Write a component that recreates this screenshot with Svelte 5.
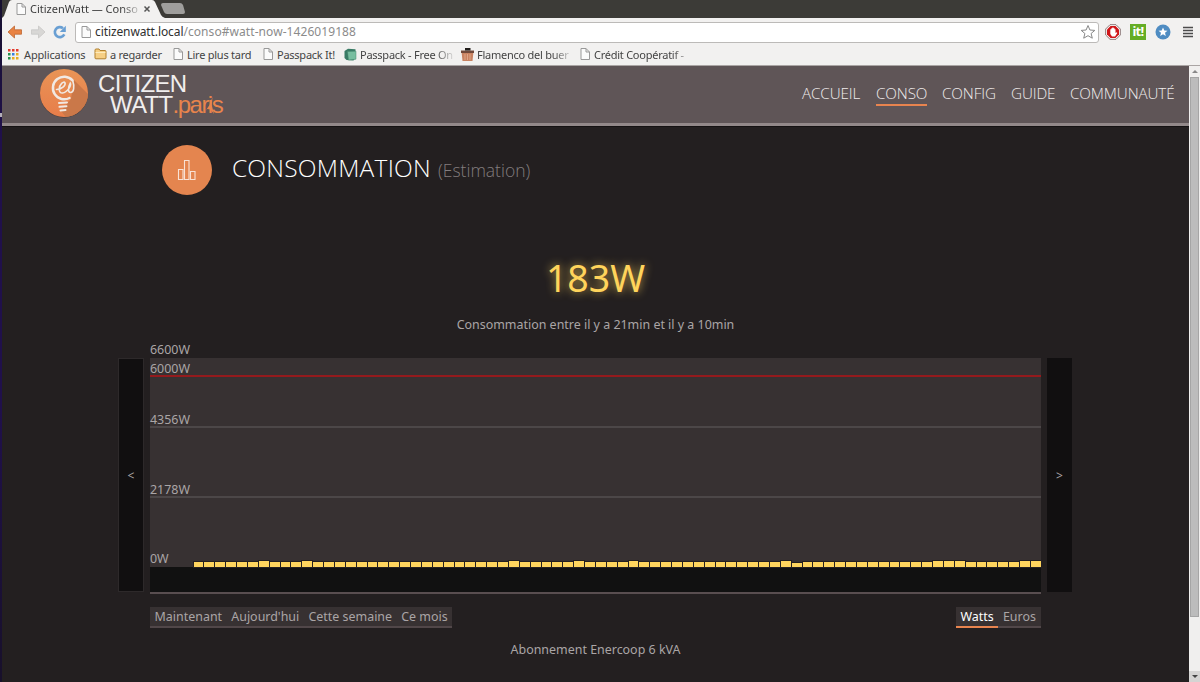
<script lang="ts">
	const bookmarks = [
		{ label: 'a regarder', icon: 'folder', width: 78 },
		{ label: 'Lire plus tard', icon: 'page', width: 90 },
		{ label: 'Passpack It!', icon: 'page', width: 82 },
		{ label: 'Passpack - Free On', icon: 'cube', width: 117, fade: true },
		{ label: 'Flamenco del buer', icon: 'photo', width: 118, fade: true },
		{ label: 'Crédit Coopératif -', icon: 'page', width: 120, fade: true }
	];

	const nav = [
		{ label: 'Accueil', width: 59 },
		{ label: 'Conso', width: 51 },
		{ label: 'Config', width: 54 },
		{ label: 'Guide', width: 44 },
		{ label: 'Communauté', width: 104 }
	];
	const periods = ['Maintenant', "Aujourd'hui", 'Cette semaine', 'Ce mois'];
	const units = ['Watts', 'Euros'];
	let unit = $state('Watts');

	// Offsets are from the top of the plot area.
	const scale = [
		{ label: '6600W', y: 0 },
		{ label: '6000W', y: 18, limit: true },
		{ label: '4356W', y: 69 },
		{ label: '2178W', y: 139 },
		{ label: '0W', y: 209 }
	];

	const peaks = [6, 10, 29, 35, 40, 54, 68, 69, 70, 76, 77];
	const bars = Array.from({ length: 78 }, (_, i) => (peaks.includes(i) ? 6 : i === 55 ? 4 : 5.4));
</script>

{#snippet page()}
	<svg class="ico" viewBox="0 0 12 14" width="12" height="14">
		<path d="M2 1.5h5l3.5 3.5v7.5H2zM7 1.5V5h3.5" fill="#fbfbfb" stroke="#999" stroke-width="1" />
	</svg>
{/snippet}

<div class="window">
	<div class="edge"><i></i></div>
	<div class="browser">
		<div class="tabs">
			<svg class="tabshape" viewBox="0 0 184 18" width="184" height="18">
				<path d="M0 18 2 16 7 2Q8 0 10 0H150Q152 0 153 2L159 15Q160 17 163 18Z" fill="#f2f1f0" />
				<path d="M159 5Q159 3 161 3H178Q180 3 181 5L183 12Q183 14 181 14H165Q163 14 162 12Z" fill="#9f9e9c" />
			</svg>
			<div class="tab">
				{@render page()}
				<span class="title">CitizenWatt — Conso</span>
				<svg viewBox="0 0 8 8" width="8" height="8"><path d="M1.5 1.5l5 5M6.5 1.5l-5 5" stroke="#555" stroke-width="1.5" /></svg>
			</div>
		</div>

		<div class="toolbar">
			<svg viewBox="0 0 16 14" width="16" height="14">
				<path d="M7.5 1 1 7l6.500 6V9.200H14.500V4.800H7.500z" fill="#e98242" stroke="#bd6733" stroke-width=".8" stroke-linejoin="round" />
			</svg>
			<svg class="forward" viewBox="0 0 16 14" width="16" height="14">
				<path d="M8.500 1 15 7 8.500 13V9.200H1.500V4.800H8.500z" fill="#d8d7d5" stroke="#c8c7c5" stroke-width=".8" stroke-linejoin="round" />
			</svg>
			<svg class="reload" viewBox="0 0 14 14" width="14" height="14">
				<path d="M11.300 9.400A5 5 0 1 1 10 3.200" fill="none" stroke="#699fd3" stroke-width="2.600" />
				<path d="M12.800.8V7H6.800z" fill="#699fd3" />
			</svg>
			<div class="address">
				{@render page()}
				<span class="url"><b>citizenwatt.local</b>/conso#watt-now-1426019188</span>
				<svg class="star" viewBox="0 0 16 16" width="16" height="16">
					<path d="M8 1.500 9.900 6l4.900.4-3.700 3.100 1.200 4.700L8 11.700l-4.300 2.500 1.200-4.700L1.200 6.400 6.100 6z" fill="#fff" stroke="#888" stroke-linejoin="round" />
				</svg>
			</div>
			<svg class="ext" viewBox="0 0 16 16" width="16" height="16">
				<path d="M5 .7h6L15.300 5v6L11 15.300H5L.7 11V5z" fill="#fff" stroke="#8b7777" />
				<path d="M5.500 2h5L14 5.500v5L10.500 14h-5L2 10.500v-5z" fill="#cf1518" />
				<path d="M5.300 7.500V5.300h1v-1h1v-.8h1.300v.8h1v.9h.9V9l1-.8.8.7-2.300 3.500H7L5.300 10z" fill="#fff" />
			</svg>
			<div class="it">it!</div>
			<svg viewBox="0 0 16 16" width="16" height="16">
				<circle cx="8" cy="8" r="7.500" fill="#4f8cc2" />
				<path d="m8 3.500 1.300 3 3.200.2-2.500 2.100.8 3.200L8 10.300 5.200 12 6 8.800 3.500 6.700l3.200-.2z" fill="#fff" />
			</svg>
			<svg class="menu" viewBox="0 0 10 12" width="10" height="12">
				<path d="M0 1.500h10M0 4.500h10M0 7.500h10M0 10.500h10" stroke="#4c4c4c" stroke-width="1.600" />
			</svg>
		</div>

		<div class="bookmarks">
			<div class="bookmark apps">
				<svg viewBox="0 0 11 11" width="11" height="11">
					{#each ['#e33b2e', '#e33b2e', '#e33b2e', '#25904e', '#347ee0', '#e5ac22', '#25904e', '#e5ac22', '#e5ac22'] as color, i}
						<rect x={(i % 3) * 4} y={Math.floor(i / 3) * 4} width="2.500" height="2.500" fill={color} />
					{/each}
				</svg>
				<span>Applications</span>
			</div>
			{#each bookmarks as mark}
				<div class="bookmark" class:fade={mark.fade} style:width="{mark.width}px">
					{#if mark.icon === 'page'}
						{@render page()}
					{:else if mark.icon === 'folder'}
						<svg viewBox="0 0 13 12" width="13" height="12">
							<path d="M1 10V2.200Q1 1 2 1h3l1 1.500h5q1 0 1 1V10q0 .8-1 .8H2q-1 0-1-.8z" fill="#f6cf85" stroke="#b1802e" />
							<path d="M1.500 4.500h10" stroke="#fdebbd" />
						</svg>
					{:else if mark.icon === 'cube'}
						<svg viewBox="0 0 13 13" width="13" height="13">
							<path d="M.5 3 4 .7l7.500.5V10L9.500 12.500l-7-.5L.5 10z" fill="#397b65" />
							<path d="m3.500 3.500 8.500-.3v8l-7.500.9z" fill="#78bea0" stroke="#47896f" stroke-width=".5" />
						</svg>
					{:else}
						<svg viewBox="0 0 13 13" width="13" height="13">
							<path d="M.5 3.500h12L11.500 13h-10z" fill="#c98261" />
							<path d="M0 2.500h13V5H0z" fill="#70483a" />
							<path d="M4 0h5.500v2.500H4z" fill="#211d1b" />
							<path d="M4 6v6M6.500 6v6M9 6v6" stroke="#e4ad90" stroke-width=".8" />
						</svg>
					{/if}
					<span>{mark.label}</span>
				</div>
			{/each}
		</div>

		<div class="viewport">
			<div class="site">
				<header>
					<svg class="bulb" viewBox="0 0 50 50" width="50" height="50">
						<defs>
							<clipPath id="disc"><circle cx="25" cy="25" r="24" /></clipPath>
							<linearGradient id="glow" x2="0" y2="1">
								<stop stop-color="#e99456" /><stop offset="1" stop-color="#e77d4a" />
							</linearGradient>
						</defs>
						<circle cx="25" cy="25.700" r="24" fill="#463d3e" />
						<circle cx="25" cy="25" r="24" fill="url(#glow)" />
						<path d="m35 12 17 17v24H30l-8-10 10-12z" fill="#ca7849" clip-path="url(#disc)" />
						<g fill="none" stroke="#f1e9e3" stroke-linecap="round">
							<path d="M33.500 12.300A11.300 11.300 0 1 0 30.500 30" stroke-width="2.500" />
							<path d="M17.500 21.500c5 0 9.500-4 8.500-6.700-1.200-2.300-5.800 1.700-5.800 6.400 0 5.500 5.600 5 9.800-.8 1.500-2.300 2-4 1.300-5.200-2.500 4.500-2.500 9.300.2 9.300 3.300 0 4.300-6 2.300-11.500" stroke-width="1.600" />
							<path d="m20 35 8-.6M20.500 38.800l7-.6M21.500 42.500l5-.4" stroke-width="2" />
						</g>
					</svg>
					<div class="brand">
						<span>CITIZEN</span>
						<span class="watt">WATT<em>.paris</em></span>
						<svg class="tower" viewBox="0 0 12 18" width="12" height="18">
							<path d="M10.500 0 9.700 8 12 17 8.500 12.500 5 12 1 17.500 7.500 8z" fill="#e8844c" />
						</svg>
					</div>
					<nav>
						{#each nav as item}
							<a href="#top" class:active={item.label === 'Conso'} style:width="{item.width}px">{item.label}</a>
						{/each}
					</nav>
				</header>

				<main>
					<div class="heading">
						<div class="badge">
							<svg viewBox="0 0 20 22" width="20" height="22">
								<path d="M1.500 10.500h4.500v10H1.500zM7.500 1.500h4.500v19H7.500zM13.500 12.500h4.500v8h-4.500z" fill="none" stroke="#f9e2d5" stroke-width="1.100" />
							</svg>
						</div>
						<h1>CONSOMMATION</h1>
						<small>(Estimation)</small>
					</div>

					<p class="now">183W</p>
					<p class="between">Consommation entre il y a 21min et il y a 10min</p>

					<div class="graph">
						<button class="prev">&lt;</button>
						<div class="chart">
							<div class="plot">
								{#each scale as step}
									<div class="step" class:limit={step.limit} class:bare={step.y === 0 || step.y === 209} style:top="{step.y}px">{step.label}</div>
								{/each}
								<div class="bars">
									{#each bars as height}
										<i style:height="{height}px"></i>
									{/each}
								</div>
							</div>
						</div>
						<button class="next">&gt;</button>
					</div>

					<div class="controls">
						<div class="group periods">
							{#each periods as period}
								<button>{period}</button>
							{/each}
						</div>
						<div class="group units">
							{#each units as name}
								<button class:active={unit === name} onclick={() => (unit = name)}>{name}</button>
							{/each}
						</div>
					</div>
					<p class="plan">Abonnement Enercoop 6 kVA</p>
				</main>
			</div>
			<div class="scrollbar">
				<div class="arrow up"></div>
				<div class="thumb"></div>
				<div class="arrow down"></div>
			</div>
		</div>
	</div>
</div>

<style>
	:global(body) {
		background: #231f20;
	}
	* {
		box-sizing: border-box;
	}
	svg {
		flex: none;
		display: block;
	}
	.window {
		display: flex;
		width: 1200px;
		height: 682px;
		overflow: hidden;
		font-family: 'Noto Sans', 'Open Sans', sans-serif;
	}
	.edge {
		width: 2px;
		padding-top: 113px;
		background: linear-gradient(#16102e, #20104b 20%, #20104b 60%, #18102b);
	}
	.edge i {
		display: block;
		height: 4px;
		background: #b3aeba;
	}
	.browser {
		flex: 1;
		display: flex;
		flex-direction: column;
		min-width: 0;
	}
	.tabs {
		position: relative;
		height: 18px;
		background: #3c3b37;
	}
	.tabshape {
		position: absolute;
		left: 0;
		top: 0;
	}
	.tab {
		position: relative;
		display: flex;
		align-items: center;
		height: 17px;
		padding-left: 13px;
		font-size: 11px;
		color: #3c3c3c;
	}
	.title {
		width: 109px;
		margin: 0 4px 0 3px;
		white-space: nowrap;
		-webkit-mask-image: linear-gradient(90deg, #000 84%, rgba(0, 0, 0, 0.2));
	}
	.toolbar {
		display: flex;
		align-items: center;
		height: 27px;
		padding: 1px 5px 0;
		background: #f2f1f0;
	}
	.forward {
		margin-left: 7px;
	}
	.reload {
		margin-left: 7px;
	}
	.address {
		display: flex;
		align-items: center;
		width: 1024px;
		height: 21px;
		margin-left: 8px;
		padding: 0 2px 0 4px;
		border: 1px solid #bcbab8;
		border-radius: 3px;
		background: #fff;
	}
	.url {
		flex: 1;
		margin-left: 3px;
		font-size: 12px;
		line-height: 18px;
		letter-spacing: 0.07px;
		color: #8b8b8b;
	}
	.url b {
		font-weight: 400;
		letter-spacing: -0.1px;
		color: #303030;
	}
	.ext {
		margin-left: 6px;
	}
	.it {
		width: 16px;
		height: 16px;
		margin: 0 9px;
		background: #65ad25;
		color: #fff;
		font-size: 13px;
		font-weight: 700;
		letter-spacing: -0.7px;
		line-height: 14px;
		text-align: center;
	}
	.menu {
		margin-left: 12px;
	}
	.bookmarks {
		display: flex;
		align-items: center;
		height: 21px;
		padding: 0 0 2px 6px;
		background: #f2f1f0;
		border-bottom: 1px solid #aaa5a4;
		font-size: 11px;
		letter-spacing: -0.25px;
		color: #444;
	}
	.bookmark {
		display: flex;
		align-items: center;
		gap: 3px;
		height: 18px;
		overflow: hidden;
		white-space: nowrap;
	}
	.apps {
		width: 86px;
		gap: 5px;
		letter-spacing: -0.15px;
	}
	.fade {
		-webkit-mask-image: linear-gradient(90deg, #000 78%, rgba(0, 0, 0, 0.1) 94%);
	}
	.viewport {
		flex: 1;
		display: flex;
		min-height: 0;
	}
	.site {
		flex: 1;
		background: #231f20;
	}
	header {
		display: flex;
		height: 60px;
		padding: 2px 15px 0 37px;
		background: #5f5557;
		border-bottom: 3px solid #93898a;
		box-shadow: 0 1px #151213;
	}
	.brand {
		position: relative;
		display: flex;
		flex-direction: column;
		margin: 5px 0 0 9px;
		font: 24px/21px 'Liberation Sans', sans-serif;
		letter-spacing: -0.7px;
		color: #f1eeee;
	}
	.watt {
		padding-left: 12px;
	}
	.watt em {
		font-style: normal;
		color: #e8844c;
		letter-spacing: -1.5px;
	}
	.tower {
		position: absolute;
		left: 104px;
		top: 24px;
	}
	nav {
		display: flex;
		gap: 15px;
		margin: 14px 0 0 auto;
	}
	nav a {
		height: 24px;
		font-family: 'Open Sans', sans-serif;
		font-size: 15.200px;
		font-weight: 300;
		line-height: 23px;
		white-space: nowrap;
		letter-spacing: -0.1px;
		text-transform: uppercase;
		text-decoration: none;
		color: #f0ecec;
	}
	nav a.active {
		border-bottom: 2px solid #e8844f;
	}
	.heading {
		display: flex;
		height: 50px;
		margin: 19px 0 0 160.400px;
		color: #fff;
		font-family: 'Open Sans', sans-serif;
	}
	.badge {
		display: grid;
		place-items: center;
		width: 50px;
		height: 50px;
		border-radius: 50%;
		background: #e4854f;
	}
	h1 {
		margin: 4px 7px 0 19.500px;
		font-size: 24.500px;
		font-weight: 300;
		line-height: 38px;
		letter-spacing: 0.25px;
	}
	small {
		margin-top: 8px;
		font-size: 17.500px;
		font-weight: 300;
		line-height: 34px;
		color: #827d7e;
	}
	p {
		margin: 0;
		text-align: center;
	}
	.now {
		margin-top: 56px;
		font-size: 37.500px;
		line-height: 54px;
		color: #ffd45b;
		text-shadow: 0 0 10px rgba(255, 212, 91, 0.75);
	}
	.between {
		margin-top: 8px;
		font-size: 12.450px;
		line-height: 24px;
		color: #aaa5a6;
	}
	.graph {
		display: flex;
		align-items: flex-start;
		height: 249px;
		margin: 21px 0 0 116px;
	}
	.graph button {
		width: 25px;
		height: 234px;
		padding: 0;
		border: 1px solid #2d292a;
		background: #110f10;
		color: #aaa5a6;
		font: 12px 'Noto Sans', sans-serif;
	}
	.graph .prev {
		width: 26px;
	}
	.graph .next {
		border-color: #110f10;
	}
	.chart {
		width: 891px;
		height: 236px;
		margin: 0 6px;
		background: #111;
		border-bottom: 2px solid #594e50;
	}
	.plot {
		position: relative;
		height: 209px;
		background: #373132;
	}
	.step {
		position: absolute;
		left: 0;
		width: 100%;
		height: 20px;
		margin-top: -19px;
		border-bottom: 2px solid #4c4748;
		font-size: 12.450px;
		line-height: 23px;
		color: #aaa5a6;
	}
	.step.limit {
		border-color: #941a1d;
	}
	.step.bare {
		border-color: transparent;
		line-height: 21px;
	}
	.bars {
		position: absolute;
		left: 43.500px;
		right: 0;
		bottom: 0;
		display: flex;
		align-items: flex-end;
		gap: 1px;
	}
	.bars i {
		flex: 1;
		background: #ffd55e;
		box-shadow: 0 0 0 1px #242021;
	}
	.controls {
		display: flex;
		justify-content: space-between;
		width: 890.500px;
		margin-left: 148px;
	}
	.group {
		display: flex;
		height: 21px;
		background: #373132;
	}
	.group button {
		padding: 0 4.600px;
		border: 0;
		border-bottom: 2px solid #514749;
		background: none;
		color: #aaa5a6;
		font: 12.450px/19px 'Noto Sans', sans-serif;
	}
	.group button.active {
		border-color: #e8844f;
		color: #fff;
	}
	.plan {
		margin-top: 10px;
		font-size: 12.450px;
		line-height: 24px;
		color: #aaa5a6;
	}
	.scrollbar {
		width: 11px;
		display: flex;
		flex-direction: column;
		background: #f0efee;
	}
	.arrow {
		display: grid;
		place-items: center;
		height: 11px;
	}
	.arrow::after {
		content: '';
		border: 3px solid transparent;
	}
	.up::after {
		border-top: 0;
		border-bottom-color: #888;
	}
	.thumb {
		height: 540px;
		margin: 0 1px;
		background: #bcbcbc;
		border: 1px solid #a5a5a5;
	}
	.down {
		margin-top: auto;
		background: #d5d4d3;
	}
	.down::after {
		border-bottom: 0;
		border-top-color: #444;
	}
</style>
